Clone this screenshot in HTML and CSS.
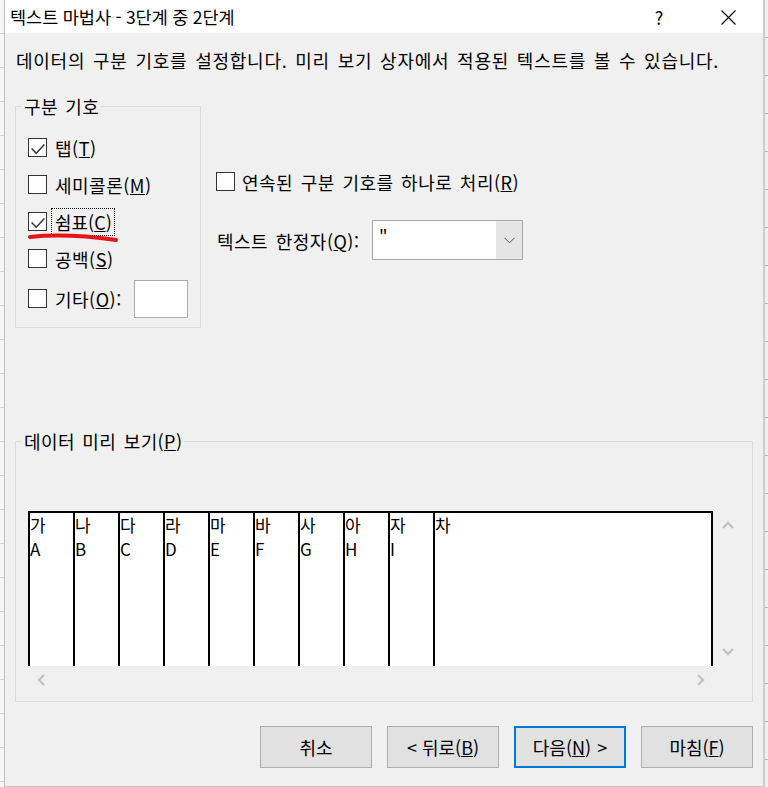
FILE: index.html
```html
<!DOCTYPE html>
<html lang="ko">
<head>
<meta charset="utf-8">
<title>텍스트 마법사</title>
<link rel="stylesheet" href="styles.css">
</head>
<body>
<div class="screen">
  <div class="edge edge-left"></div>
  <div class="dialog">
    <div class="titlebar">
      <span class="title">텍스트 마법사 - 3단계 중 2단계</span>
      <span class="help">?</span>
      <span class="close">
        <svg width="15" height="15" viewBox="0 0 15 15"><path d="M0.5 0.5 L14.5 14.5 M14.5 0.5 L0.5 14.5" stroke="#000" stroke-width="1.1" fill="none"/></svg>
      </span>
    </div>

    <p class="desc">데이터의 구분 기호를 설정합니다. 미리 보기 상자에서 적용된 텍스트를 볼 수 있습니다.</p>

    <div class="upper">
      <fieldset class="group delims">
        <legend>구분 기호</legend>
        <div class="check-row">
          <span class="box"><svg width="17" height="17" viewBox="0 0 17 17"><polyline points="2.6,9.4 7.2,14.2 15.4,5.4" fill="none" stroke="#333" stroke-width="1.5"/></svg></span>
          <span class="label">탭(<u>T</u>)</span>
        </div>
        <div class="check-row">
          <span class="box"></span>
          <span class="label">세미콜론(<u>M</u>)</span>
        </div>
        <div class="check-row marked">
          <span class="box"><svg width="17" height="17" viewBox="0 0 17 17"><polyline points="2.6,9.4 7.2,14.2 15.4,5.4" fill="none" stroke="#333" stroke-width="1.5"/></svg></span>
          <span class="label focus">쉼표(<u>C</u>)</span>
          <svg class="scribble" width="92" height="12" viewBox="0 0 92 12"><path d="M2 6 Q 38 2 88 9" fill="none" stroke="#e5141b" stroke-width="4" stroke-linecap="round"/></svg>
        </div>
        <div class="check-row">
          <span class="box"></span>
          <span class="label">공백(<u>S</u>)</span>
        </div>
        <div class="check-row other">
          <span class="box"></span>
          <span class="label">기타(<u>O</u>):</span>
          <span class="other-input"></span>
        </div>
      </fieldset>

      <div class="options">
        <div class="check-row consec">
          <span class="box"></span>
          <span class="label">연속된 구분 기호를 하나로 처리(<u>R</u>)</span>
        </div>
        <div class="qualifier">
          <span class="q-label">텍스트 한정자(<u>Q</u>):</span>
          <span class="combo">
            <span class="combo-value">"</span>
            <span class="combo-btn"><svg width="11" height="7" viewBox="0 0 11 7"><polyline points="0.5,0.8 5.5,5.8 10.5,0.8" fill="none" stroke="#555" stroke-width="1"/></svg></span>
          </span>
        </div>
      </div>
    </div>

    <fieldset class="group preview">
      <legend>데이터 미리 보기(<u>P</u>)</legend>
      <div class="preview-grid">
        <div class="data">
          <div class="col"><span>가</span><span>A</span></div>
          <div class="col"><span>나</span><span>B</span></div>
          <div class="col"><span>다</span><span>C</span></div>
          <div class="col"><span>라</span><span>D</span></div>
          <div class="col"><span>마</span><span>E</span></div>
          <div class="col"><span>바</span><span>F</span></div>
          <div class="col"><span>사</span><span>G</span></div>
          <div class="col"><span>아</span><span>H</span></div>
          <div class="col"><span>자</span><span>I</span></div>
          <div class="col last"><span>차</span></div>
        </div>
        <div class="vscroll">
          <span class="sbtn"><svg width="12" height="8" viewBox="0 0 12 8"><polyline points="1,7 6,2 11,7" fill="none" stroke="#c3c3c3" stroke-width="2.4"/></svg></span>
          <span class="sbtn"><svg width="12" height="8" viewBox="0 0 12 8"><polyline points="1,1 6,6 11,1" fill="none" stroke="#c3c3c3" stroke-width="2.4"/></svg></span>
        </div>
        <div class="hscroll">
          <span class="sbtn"><svg width="8" height="12" viewBox="0 0 8 12"><polyline points="7,1 2,6 7,11" fill="none" stroke="#c3c3c3" stroke-width="2.4"/></svg></span>
          <span class="sbtn"><svg width="8" height="12" viewBox="0 0 8 12"><polyline points="1,1 6,6 1,11" fill="none" stroke="#c3c3c3" stroke-width="2.4"/></svg></span>
        </div>
      </div>
    </fieldset>

    <div class="buttons">
      <span class="btn">취소</span>
      <span class="btn">&lt; 뒤로(<u>B</u>)</span>
      <span class="btn default">다음(<u>N</u>) &gt;</span>
      <span class="btn">마침(<u>F</u>)</span>
    </div>
  </div>
  <div class="edge edge-right"></div>
</div>
</body>
</html>
```

FILE: styles.css
```css
* { box-sizing: border-box; }

html, body {
  margin: 0;
  padding: 0;
}

body {
  width: 768px;
  height: 787px;
  overflow: hidden;
  background: #f0f0f0;
  font-family: "Noto Sans CJK KR", "Noto Sans", sans-serif;
  font-size: 18px;
  color: #000;
}

.screen {
  display: flex;
  height: 787px;
}

.edge-left {
  width: 4px;
  background-color: #f6f6f6;
  background-image: repeating-linear-gradient(to bottom, transparent 0, transparent 33px, #d2d2d2 33px, #d2d2d2 34px);
}

.edge-right {
  width: 5px;
  border-left: 2px solid #cdcdcd;
  background-color: #f0f0f0;
  background-image: repeating-linear-gradient(to bottom, transparent 0, transparent 37px, #b8b8b8 37px, #b8b8b8 38px);
}

.dialog {
  width: 759px;
  height: 787px;
  border-left: 1px solid #bcbcbc;
  border-bottom: 1px solid #c4c4c4;
  background: #f0f0f0;
  display: flex;
  flex-direction: column;
}

/* title bar */
.titlebar {
  height: 33px;
  flex: none;
  background: #fff;
  display: flex;
  align-items: center;
  padding-left: 5px;
  padding-right: 27px;
  padding-top: 1px;
}

.title {
  flex: 1;
  font-size: 17.5px;
  word-spacing: -0.5px;
  line-height: 24px;
}

.help {
  width: 20px;
  text-align: center;
  line-height: 24px;
  margin-right: 52px;
}

.close {
  display: flex;
  width: 15px;
  height: 15px;
}

/* description */
.desc {
  margin: 15px 0 0 0;
  padding-left: 11px;
  line-height: 24px;
  letter-spacing: 0.75px;
  word-spacing: 2px;
  white-space: nowrap;
}

/* groups */
.group {
  margin: 0;
  border: 1px solid #dcdcdc;
  min-width: 0;
}

.group legend {
  padding: 0 2px;
  margin-left: -6px;
  line-height: 24px;
  letter-spacing: 0.4px;
  word-spacing: 2px;
}

.upper {
  display: flex;
  margin: 22px 0 0 10px;
  gap: 15px;
  align-items: flex-start;
}

.delims {
  width: 186px;
  padding: 11px 12px 9px 12px;
}

.check-row {
  display: flex;
  align-items: center;
  height: 37px;
  gap: 8px;
}

.check-row.other {
  height: 39px;
  margin-top: 2px;
}

.check-row.marked {
  position: relative;
}

.box {
  width: 19px;
  height: 19px;
  flex: none;
  border: 1px solid #333;
  background: #fff;
  display: flex;
}

.label {
  line-height: 24px;
  white-space: nowrap;
  letter-spacing: 0.5px;
  word-spacing: 2px;
}

.label.focus {
  border: 1px dotted #000;
  padding: 1px 2px 1px 3px;
  margin-left: -4px;
  letter-spacing: 0;
  line-height: 24px;
}

.scribble {
  position: absolute;
  left: 0;
  top: 28px;
}

.other-input {
  margin-left: auto;
  width: 54px;
  height: 38px;
  background: #fff;
  border: 1px solid #ababab;
}

.options {
  margin-top: 75px;
  display: flex;
  flex-direction: column;
}

.check-row.consec {
  height: 25px;
  gap: 7px;
}

.qualifier {
  display: flex;
  align-items: center;
  margin-top: 26px;
  margin-left: 1px;
}

.q-label {
  width: 155px;
  line-height: 24px;
  padding-top: 2px;
  letter-spacing: 0.5px;
  word-spacing: 2px;
}

.combo {
  width: 151px;
  height: 40px;
  border: 1px solid #a8a8a8;
  background: #fff;
  display: flex;
}

.combo-value {
  flex: 1;
  padding-left: 6px;
  line-height: 32px;
}

.combo-btn {
  width: 26px;
  background: #e5e5e5;
  display: flex;
  align-items: center;
  justify-content: center;
}

/* preview */
.preview {
  margin: 101px 0 0 10px;
  width: 738px;
  padding: 58px 8px 7px 12px;
}

.preview-grid {
  display: grid;
  grid-template-columns: 685px 30px;
  grid-template-rows: 155px 28px;
}

.data {
  display: flex;
  background: #fff;
  border-top: 2px solid #000;
  border-right: 2px solid #000;
}

.col {
  width: 45px;
  flex: none;
  border-left: 2px solid #000;
  display: flex;
  flex-direction: column;
  font-size: 17px;
  font-weight: 400;
  color: #000;
  line-height: 24px;
  padding-left: 0;
}

.col.last {
  flex: 1;
}

.vscroll {
  display: flex;
  flex-direction: column;
  justify-content: space-between;
}

.vscroll .sbtn {
  height: 28px;
  display: flex;
  align-items: center;
  justify-content: center;
}

.hscroll {
  display: flex;
  justify-content: space-between;
}

.hscroll .sbtn {
  width: 25px;
  display: flex;
  align-items: center;
  justify-content: center;
}

/* buttons */
.buttons {
  display: flex;
  justify-content: flex-end;
  gap: 15px;
  margin-top: 24px;
  padding-right: 10px;
}

.btn {
  width: 112px;
  height: 42px;
  background: #e1e1e1;
  border: 1px solid #adadad;
  display: flex;
  align-items: center;
  justify-content: center;
  line-height: 24px;
}

.btn.default {
  border: 2px solid #0078d7;
  word-spacing: 1px;
}
```
